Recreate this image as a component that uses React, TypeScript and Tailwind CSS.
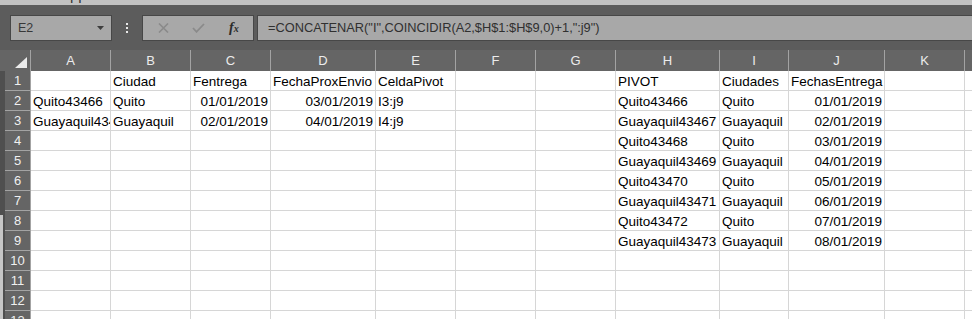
import React from 'react'

// Column widths include the 1px right gridline.
const COLS = [
  { id: 'A', w: 'w-[80px]' },
  { id: 'B', w: 'w-[80px]' },
  { id: 'C', w: 'w-[80px]' },
  { id: 'D', w: 'w-[105px]' },
  { id: 'E', w: 'w-[80px]' },
  { id: 'F', w: 'w-[80px]' },
  { id: 'G', w: 'w-[80px]' },
  { id: 'H', w: 'w-[104px]' },
  { id: 'I', w: 'w-[69px]' },
  { id: 'J', w: 'w-[96px]' },
  { id: 'K', w: 'w-[80px]' },
  { id: 'L', w: 'w-[80px]' },
]

const DATA: Record<number, Record<string, string>> = {
  1: { B: 'Ciudad', C: 'Fentrega', D: 'FechaProxEnvio', E: 'CeldaPivot', H: 'PIVOT', I: 'Ciudades', J: 'FechasEntrega' },
  2: { A: 'Quito43466', B: 'Quito', C: '01/01/2019', D: '03/01/2019', E: 'I3:j9', H: 'Quito43466', I: 'Quito', J: '01/01/2019' },
  3: { A: 'Guayaquil43467', B: 'Guayaquil', C: '02/01/2019', D: '04/01/2019', E: 'I4:j9', H: 'Guayaquil43467', I: 'Guayaquil', J: '02/01/2019' },
  4: { H: 'Quito43468', I: 'Quito', J: '03/01/2019' },
  5: { H: 'Guayaquil43469', I: 'Guayaquil', J: '04/01/2019' },
  6: { H: 'Quito43470', I: 'Quito', J: '05/01/2019' },
  7: { H: 'Guayaquil43471', I: 'Guayaquil', J: '06/01/2019' },
  8: { H: 'Quito43472', I: 'Quito', J: '07/01/2019' },
  9: { H: 'Guayaquil43473', I: 'Guayaquil', J: '08/01/2019' },
}

const ROWS = [1, 2, 3, 4, 5, 6, 7, 8, 9, 10, 11, 12, 13]

const isDate = (v: string) => /^\d{2}\/\d{2}\/\d{4}$/.test(v)

export default function App() {
  return (
    <div className="w-[972px] h-[319px] overflow-hidden bg-white font-['Liberation_Sans',Arial,sans-serif]">
      {/* window title remnant */}
      <div className="h-[5px] overflow-hidden bg-[#c2c2c2]">
        <div className="ml-[70px] -mt-[13px] text-[15px] leading-[15px] text-[#333]">pp</div>
      </div>

      <FormulaBar />

      {/* column headers */}
      <div className="flex h-[21px] bg-[#656565]">
        <div className="w-[31px] shrink-0 border-r border-[#a3a3a3] flex items-end justify-end pr-[3px] pb-[3px]">
          <svg width="12" height="11" viewBox="0 0 12 11">
            <polygon points="12,0 12,11 0,11" fill="#ececec" />
          </svg>
        </div>
        {COLS.map((c) => (
          <div
            key={c.id}
            className={`${c.w} shrink-0 border-r border-[#a3a3a3] flex items-center justify-center text-[13px] text-[#ececec]`}
          >
            {c.id === 'L' ? '' : c.id}
          </div>
        ))}
      </div>

      {/* sheet body */}
      <div className="flex">
        <div className="w-[5px] shrink-0 flex flex-col">
          <div className="h-[144px] bg-[#4f4f4f]" />
          <div className="flex-1 h-[120px] bg-[#c6c6c6] border-r-2 border-[#4f4f4f]" />
        </div>
        <div className="flex flex-col">
          {ROWS.map((r) => (
            <div key={r} className="flex h-[20px]">
              <div className="w-[26px] shrink-0 bg-[#656565] border-r border-b border-[#a3a3a3] flex items-center justify-center pt-[1px] text-[13px] text-[#f0f0f0]">
                {r}
              </div>
              {COLS.map((c) => {
                const v = DATA[r]?.[c.id] ?? ''
                return (
                  <div
                    key={c.id}
                    className={`${c.w} shrink-0 border-r border-b border-[#d6d6d6] flex items-end px-[2px] overflow-hidden whitespace-nowrap text-[13.5px] leading-[16px] text-black ${
                      isDate(v) ? 'justify-end' : 'justify-start'
                    }`}
                  >
                    {v}
                  </div>
                )
              })}
            </div>
          ))}
        </div>
      </div>
    </div>
  )
}

function FormulaBar() {
  return (
    <div className="h-[45px] bg-[#5c5c5c] flex items-start pt-[10px]">
      {/* name box */}
      <div className="ml-[10px] w-[102px] h-[26px] bg-[#a8a8a8] border border-[#474747] flex items-center pl-[7px] pr-[7px]">
        <span className="text-[12.5px] text-[#383838]">E2</span>
        <svg className="ml-auto" width="7" height="4" viewBox="0 0 7 4">
          <polygon points="0,0 7,0 3.5,4" fill="#3e3e3e" />
        </svg>
      </div>

      {/* grip dots */}
      <div className="w-[30px] h-[26px] flex flex-col items-center justify-center gap-[2px]">
        <span className="w-[2px] h-[2px] bg-[#e8e8e8]" />
        <span className="w-[2px] h-[2px] bg-[#e8e8e8]" />
        <span className="w-[2px] h-[2px] bg-[#e8e8e8]" />
      </div>

      {/* cancel / enter / fx */}
      <div className="w-[112px] h-[26px] bg-[#a8a8a8] border border-[#474747] flex items-center">
        <svg className="ml-[15px]" width="11" height="10" viewBox="0 0 11 10">
          <path d="M1 0.5 L10 9.5 M10 0.5 L1 9.5" stroke="#8a8a8a" strokeWidth="1.6" />
        </svg>
        <svg className="ml-[23px]" width="13" height="10" viewBox="0 0 13 10">
          <path d="M1 5 L4.5 8.8 L12 1" stroke="#8a8a8a" strokeWidth="1.8" fill="none" />
        </svg>
        <span className="ml-[24px] font-['Liberation_Serif',serif] italic font-bold text-[14px] leading-none text-[#2b2b2b]">
          f<span className="text-[10px]">x</span>
        </span>
      </div>

      {/* formula */}
      <div className="ml-[3px] flex-1 h-[26px] bg-[#a8a8a8] border border-r-0 border-[#474747] flex items-center pl-[10px] text-[12.8px] text-[#303030] whitespace-nowrap">
        =CONCATENAR("I",COINCIDIR(A2,$H$1:$H$9,0)+1,":j9")
      </div>
    </div>
  )
}
